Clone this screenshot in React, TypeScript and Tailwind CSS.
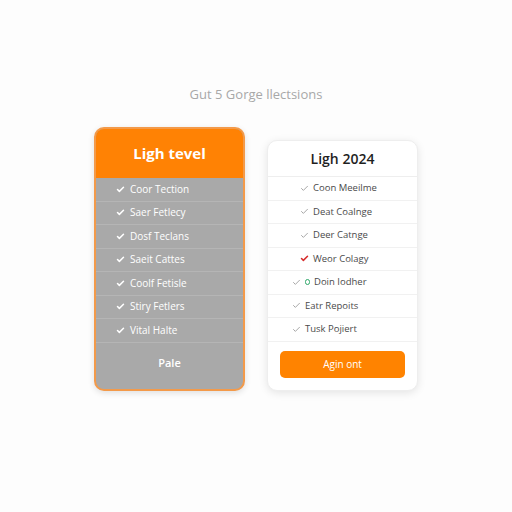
import { Check } from "lucide-react";

const leftRows = [
  "Coor Tection",
  "Saer Fetlecy",
  "Dosf Teclans",
  "Saeit Cattes",
  "Coolf Fetisle",
  "Stiry Fetlers",
  "Vital Halte",
];

type RightRow = { label: string; mark: "gray" | "red" | "green"; indent: boolean };

const rightRows: RightRow[] = [
  { label: "Coon Meeilme", mark: "gray", indent: true },
  { label: "Deat Coalnge", mark: "gray", indent: true },
  { label: "Deer Catnge", mark: "gray", indent: true },
  { label: "Weor Colagy", mark: "red", indent: true },
  { label: "Doin Iodher", mark: "green", indent: false },
  { label: "Eatr Repoits", mark: "gray", indent: false },
  { label: "Tusk Pojiert", mark: "gray", indent: false },
];

export default function App() {
  return (
    <div
      className="flex h-[512px] w-[512px] flex-col items-center bg-[#fdfdfd]"
      style={{ fontFamily: "'Open Sans', 'Liberation Sans', sans-serif" }}
    >
      <p className="mt-[85px] text-[13px] leading-[18px] text-[#a8a8a8]">
        Gut 5 Gorge llectsions
      </p>

      <div className="mt-[24px] flex items-start gap-[22px]">
        {/* left plan */}
        <div className="flex h-[264px] w-[151px] flex-col overflow-hidden rounded-[10px] border-2 border-[#f39a4a] bg-[#a9a9a9] shadow-[0_2px_6px_rgba(0,0,0,0.12)]">
          <div className="flex h-[49px] items-center justify-center bg-[#ff8204]">
            <span className="text-[15px] font-bold text-white">Ligh tevel</span>
          </div>
          <ul>
            {leftRows.map((row) => (
              <li
                key={row}
                className="flex h-[23.5px] items-center gap-[5px] border-b border-[#b5b5b5] pl-[20px] text-[10px] text-white"
              >
                <Check className="h-[9px] w-[9px]" strokeWidth={4} />
                {row}
              </li>
            ))}
          </ul>
          <div className="flex flex-1 items-center justify-center pb-[6px]">
            <span className="text-[11px] font-semibold text-white">Pale</span>
          </div>
        </div>

        {/* right plan */}
        <div className="mt-[13px] flex h-[251px] w-[151px] flex-col rounded-[10px] border border-[#eeeeee] bg-white shadow-[0_2px_8px_rgba(0,0,0,0.1)]">
          <div className="flex h-[36px] items-center justify-center border-b border-[#eeeeee]">
            <span className="text-[14px] font-semibold text-[#1f1f1f]">Ligh 2024</span>
          </div>
          <ul>
            {rightRows.map((row) => (
              <li
                key={row.label}
                className={`flex h-[23.5px] items-center gap-[4px] border-b border-[#f1f1f1] text-[9.5px] text-[#4a4a4a] ${
                  row.indent ? "pl-[32px]" : "pl-[24px]"
                }`}
              >
                {row.mark === "red" ? (
                  <Check className="h-[9px] w-[9px] text-[#d62b2b]" strokeWidth={4} />
                ) : (
                  <Check className="h-[9px] w-[9px] text-[#8a8a8a]" strokeWidth={2} />
                )}
                {row.mark === "green" ? (
                  <span className="h-[6px] w-[5px] rounded-full border-[1.5px] border-[#2fa86a]" />
                ) : null}
                {row.label}
              </li>
            ))}
          </ul>
          <div className="flex flex-1 items-center px-[12px] pb-[2px]">
            <button className="flex h-[27px] w-full items-center justify-center rounded-[5px] bg-[#ff8300] text-[10px] text-white">
              Agin ont
            </button>
          </div>
        </div>
      </div>
    </div>
  );
}
